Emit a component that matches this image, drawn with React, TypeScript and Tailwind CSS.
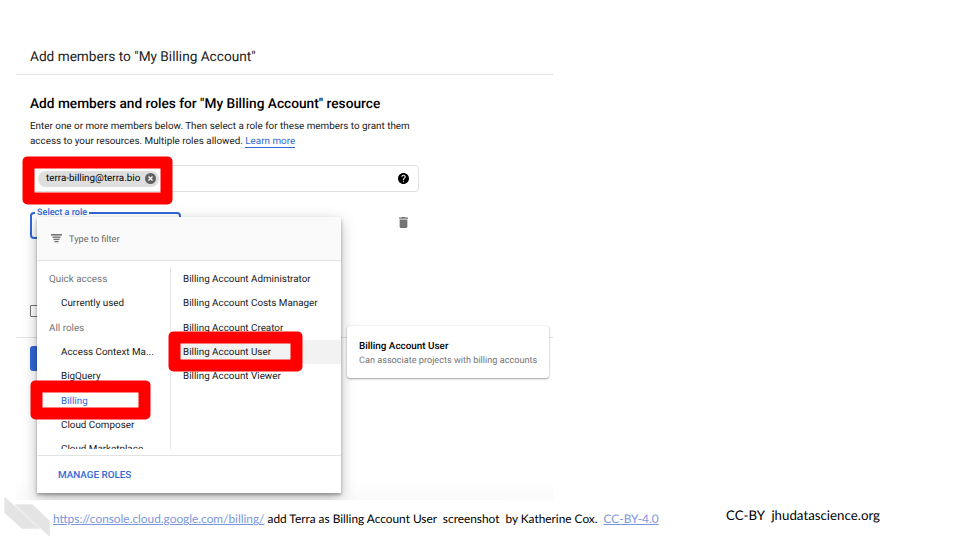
import React from "react";

const roleGroups = [
  { label: "Quick access", heading: true },
  { label: "Currently used" },
  { label: "All roles", heading: true },
  { label: "Access Context Ma..." },
  { label: "BigQuery" },
  { label: "Billing", active: true },
  { label: "Cloud Composer" },
  { label: "Cloud Marketplace" },
];

const roles = [
  "Billing Account Administrator",
  "Billing Account Costs Manager",
  "Billing Account Creator",
  "Billing Account User",
  "Billing Account Viewer",
];

function Highlight({ className }: { className: string }) {
  return (
    <div className={`absolute translate-x-[0.5px] translate-y-[0.4px] rounded-[5px] border-[12px] border-[#ff0000] ${className}`} />
  );
}

function RoleMenu() {
  return (
    <div className="absolute left-[37px] top-[217px] flex h-[276px] w-[304px] flex-col bg-white text-[9.86px] text-[#212121] shadow-[0_2px_3px_rgba(0,0,0,0.3),0_5px_14px_rgba(0,0,0,0.26)]">
      <div className="flex h-[44px] shrink-0 items-center border-b border-[#e2e2e2] bg-[#fafafa] pl-[14px]">
        <svg className="h-[9px] w-[11px]" viewBox="0 0 11 9" fill="#757575">
          <rect x="0" y="0" width="11" height="1.600" />
          <rect x="1.500" y="2.500" width="8" height="1.400" />
          <rect x="2.500" y="4.700" width="6" height="1.400" />
          <rect x="3.500" y="7" width="4" height="1.300" />
        </svg>
        <span className="ml-[7px] pt-[3px] text-[9.2px] text-[#666]">Type to filter</span>
      </div>
      <div className="flex h-[188px] shrink-0 pt-[6px]">
        <div className="h-[182px] w-[134px] shrink-0 overflow-hidden border-r border-[#e6e6e6]">
          {roleGroups.map((r) => (
            <div
              key={r.label}
              className={`h-[24.35px] whitespace-nowrap leading-[26.6px] ${
                r.heading ? "pl-[12px] text-[#757575]" : "pl-[24px]"
              } ${r.active ? "text-[#3367d6]" : ""}`}
            >
              {r.label}
            </div>
          ))}
        </div>
        <div className="grow">
          {roles.map((r) => (
            <div
              key={r}
              className={`h-[24.35px] whitespace-nowrap pl-[12px] leading-[26.6px] ${
                r === "Billing Account User" ? "bg-[#f2f2f2]" : ""
              }`}
            >
              {r}
            </div>
          ))}
        </div>
      </div>
      <div className="mt-[6px] flex grow items-center border-t border-[#e2e2e2] pl-[21px] pt-[3px] font-medium text-[#3367d6]">
        MANAGE ROLES
      </div>
    </div>
  );
}

function Dialog() {
  return (
    <section className="relative ml-4 h-[500px] w-[537px] overflow-hidden bg-[linear-gradient(to_bottom,#fff_480px,#fafafa_500px)] font-[Roboto,sans-serif] text-[#212121]">
      <header className="flex h-[75px] items-end border-b border-[#e4e4e4] pb-[7px] pl-[14px]">
        <h1 className="text-[13.65px] leading-[20px]">Add members to "My Billing Account"</h1>
      </header>
      <div className="pl-[14px] pt-[19px]">
        <h2 className="text-[13.69px] font-medium leading-[20px] text-black">
          Add members and roles for "My Billing Account" resource
        </h2>
        <p className="mt-[5px] whitespace-nowrap text-[9.87px] leading-[15px]">
          Enter one or more members below. Then select a role for these members to grant them
          <br />
          access to your resources. Multiple roles allowed.{" "}
          <a className="border-b border-[#3367d6] text-[#3367d6]">Learn more</a>
        </p>
        <div className="mt-[16px] flex h-[27px] w-[389px] items-center justify-between rounded-[4px] border border-[#dfdfdf] pl-[7px] pr-[9px]">
          <span className="flex h-[16px] items-center rounded-full bg-[#dedede] pl-[8px] pr-[3px] text-[9.86px] leading-[14px] text-black">
            <span className="pt-[1px]">terra-billing@terra.bio</span>
            <svg className="ml-[5px] h-[11px] w-[11px]" viewBox="0 0 11 11">
              <circle cx="5.5" cy="5.5" r="5.5" fill="#616161" />
              <path d="M3.5 3.5l4 4M7.5 3.5l-4 4" stroke="#fff" strokeWidth="1.3" />
            </svg>
          </span>
          <svg className="h-[11px] w-[11px]" viewBox="2 2 20 20">
            <path d="M12 2C6.48 2 2 6.48 2 12s4.480 10 10 10 10-4.480 10-10S17.520 2 12 2zm1 17h-2v-2h2v2zm2.070-7.750l-.9.920C13.450 12.900 13 13.500 13 15h-2v-.5c0-1.100.45-2.100 1.170-2.830l1.240-1.260c.37-.36.59-.86.59-1.410 0-1.100-.9-2-2-2s-2 .9-2 2H8c0-2.210 1.790-4 4-4s4 1.790 4 4c0 .88-.36 1.680-.93 2.250z" fill="#000" />
          </svg>
        </div>
        <div className="mt-[19px] flex w-[388px] items-start justify-between pr-[10px]">
          <fieldset className="-mt-[5px] h-[33px] w-[151px] rounded-[4px] border-2 border-[#3367d6] pl-[3px]">
            <legend className="px-[2px] pt-[1px] text-[9.1px] font-medium leading-[13px] text-[#3367d6]">Select a role</legend>
          </fieldset>
          <svg className="mt-[6px] h-[11px] w-[9px]" viewBox="5 3 14 18" preserveAspectRatio="none" fill="#757575">
            <path d="M6 19c0 1.100.9 2 2 2h8c1.100 0 2-.9 2-2V7H6v12zM19 4h-3.500l-1-1h-5l-1 1H5v2h14V4z" />
          </svg>
        </div>
        <div className="mt-[66px] h-[12px] w-[12px] rounded-[1px] border-[1.5px] border-[#757575]" />
      </div>
      <div className="mt-[20px] border-t border-[#e4e4e4] pl-[14px] pt-[8px]">
        <div className="h-[25px] w-[60px] rounded-[3px] bg-[#3367d6]" />
      </div>
      <div className="absolute -left-4 top-0">
        <RoleMenu />
      </div>
      <div className="absolute left-[331px] top-[326px] flex h-[52px] w-[202px] flex-col rounded-[3px] bg-white pl-[12px] pt-[14px] leading-[14px] shadow-[0_1px_2px_rgba(0,0,0,0.35),0_0_2px_rgba(0,0,0,0.12)]">
        <b className="text-[9.88px] font-medium text-black">Billing Account User</b>
        <span className="whitespace-nowrap text-[9.13px] text-[#757575]">Can associate projects with billing accounts</span>
      </div>
    </section>
  );
}

export default function App() {
  return (
    <main className="relative h-[540px] w-[960px] overflow-hidden bg-white [text-rendering:geometricPrecision]">
      <Dialog />
      <Highlight className="left-[22px] top-[156px] h-[48px] w-[150px]" />
      <Highlight className="left-[168px] top-[331px] h-[40px] w-[134px]" />
      <Highlight className="left-[30px] top-[380px] h-[39px] w-[120px]" />
      <footer className="flex h-[40px] items-start whitespace-pre font-[Lato,sans-serif] text-black">
        <svg className="absolute left-[4px] top-[496px] h-[41px] w-[46px]" viewBox="4 496 46 41" fill="#e4e4e4">
          <path d="M4.300 496.500L39.500 528.800H22L4.300 512.800z" />
          <path d="M15 504.300H32.300L49.800 520.700V536.800L39 527.200z" />
          <path d="M15 505.300L39.500 528.200" stroke="#ebebeb" strokeWidth="1.2" />
        </svg>
        <p className="ml-[53px] mt-[10px] w-[673px] text-[11.85px] leading-[18px]">
          <a className="text-[#7b96dc] underline">https://console.cloud.google.com/billing/</a>
          {" add Terra as Billing Account User  screenshot  by Katherine Cox.  "}
          <a className="text-[#7b96dc] underline">CC-BY-4.0</a>
        </p>
        <p className="mt-[6px] text-[13.3px] leading-[18px]">{"CC-BY  jhudatascience.org"}</p>
      </footer>
    </main>
  );
}
